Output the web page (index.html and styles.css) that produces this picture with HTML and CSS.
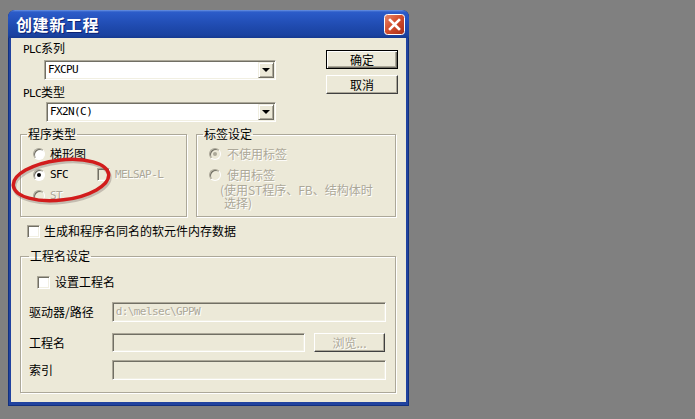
FILE: index.html
```html
<!DOCTYPE html>
<html lang="zh-CN">
  <head>
    <meta charset="UTF-8" />
    <meta name="viewport" content="width=device-width, initial-scale=1.0" />
    <title>创建新工程</title>
    <link rel="stylesheet" href="styles.css">
  </head>
  <body>
    <div class="window">
      <div class="titlebar">
        <span class="title">创建新工程</span>
        <span class="close">
          <svg width="21" height="21" viewBox="0 0 21 21">
            <defs>
              <linearGradient id="red" x1="0" y1="0" x2="1" y2="1">
                <stop offset="0" stop-color="#e98a6e" />
                <stop offset="0.45" stop-color="#d5502f" />
                <stop offset="1" stop-color="#a82b14" />
              </linearGradient>
            </defs>
            <rect x="0.5" y="0.5" width="20" height="20" rx="3" fill="url(#red)" stroke="#fff" />
            <path d="M6 6 L15 15 M15 6 L6 15" stroke="#fff" stroke-width="2.6" stroke-linecap="square" />
          </svg>
        </span>
      </div>

      <div class="client">
        <div class="top">
          <div class="fields">
            <div class="label"><span class="en">PLC</span>系列</div>
            <div class="combo combo--series">
              <span class="combo__value en">FXCPU</span>
              <span class="combo__btn"></span>
            </div>
            <div class="label label--type"><span class="en">PLC</span>类型</div>
            <div class="combo combo--type">
              <span class="combo__value en">FX2N(C)</span>
              <span class="combo__btn"></span>
            </div>
          </div>
          <div class="actions">
            <button class="btn btn--default">确定</button>
            <button class="btn">取消</button>
          </div>
        </div>

        <div class="groups">
          <fieldset class="group group--program">
            <legend>程序类型</legend>
            <div class="row">
              <span class="radio"></span><span class="text">梯形图</span>
            </div>
            <div class="row">
              <span class="opt-sfc"><span class="radio radio--on"></span><span class="text en">SFC</span></span>
              <span class="check check--off"></span><span class="text en off">MELSAP-L</span>
            </div>
            <div class="row">
              <span class="radio radio--off"></span><span class="text en off">ST</span>
            </div>
          </fieldset>

          <fieldset class="group group--label">
            <legend>标签设定</legend>
            <div class="row">
              <span class="radio radio--off radio--on"></span><span class="text text--wide off">不使用标签</span>
            </div>
            <div class="row">
              <span class="radio radio--off"></span><span class="text text--wide off">使用标签</span>
            </div>
            <p class="note off">(使用ST程序、FB、结构体时</p>
            <p class="note note--tail off">选择)</p>
          </fieldset>
        </div>

        <div class="row-check">
          <span class="check"></span><span class="text">生成和程序名同名的软元件内存数据</span>
        </div>

        <fieldset class="group group--project">
          <legend>工程名设定</legend>
          <div class="row-check row-check--name">
            <span class="check"></span><span class="text">设置工程名</span>
          </div>
          <div class="form-row form-row--path">
            <span class="form-label">驱动器/路径</span>
            <span class="input input--wide en off">d:\melsec\GPPW</span>
          </div>
          <div class="form-row form-row--name">
            <span class="form-label">工程名</span>
            <span class="input input--short"></span>
            <button class="btn btn--browse off">浏览...</button>
          </div>
          <div class="form-row form-row--index">
            <span class="form-label">索引</span>
            <span class="input input--wide"></span>
          </div>
        </fieldset>

        <svg class="mark" width="112" height="58" viewBox="0 0 112 58">
          <ellipse cx="51" cy="31" rx="48" ry="20" transform="rotate(-7 51 31)" fill="none" stroke="#7a6a66" stroke-opacity="0.35" stroke-width="4" />
          <ellipse cx="50" cy="29" rx="48" ry="20" transform="rotate(-7 50 29)" fill="none" stroke="#d21c1c" stroke-width="3.5" />
        </svg>
      </div>
    </div>
  </body>
</html>
```

FILE: styles.css
```css
* {
  margin: 0;
  padding: 0;
  box-sizing: border-box;
}
body {
  background-color: #808080;
  font: 12px/14px "Noto Sans CJK SC", sans-serif;
  color: #000;
}
.en {
  font-family: "DejaVu Sans Mono", "Noto Sans CJK SC", monospace;
  font-size: 11px;
  letter-spacing: -0.6px;
}
.off {
  color: #aca899;
  text-shadow: 1px 1px 0 #fff;
}

/* window frame */
.window {
  width: 401px;
  height: 396px;
  margin: 10px 0 0 8px;
  background-color: #21439f;
  border-radius: 7px 7px 0 0;
  box-shadow: inset 0 0 0 1px #12307f;
  padding-bottom: 4px;
  display: flex;
  flex-direction: column;
}
.titlebar {
  height: 28px;
  display: flex;
  align-items: center;
  justify-content: space-between;
  padding: 0 4px 0 8px;
  border-radius: 7px 7px 0 0;
  background: linear-gradient(to bottom, #6b93e2 0, #2c5cc9 2px, #2654bf 8px, #1f4aae 60%, #1a42a0 90%, #15398f 100%);
}
.title {
  color: #fff;
  font-weight: bold;
  font-size: 16px;
  letter-spacing: 0.6px;
  text-shadow: 1px 1px 0 #0c2273;
}
.close {
  display: block;
  width: 21px;
  height: 21px;
}
.close svg {
  display: block;
}
.client {
  flex: 1;
  margin: 0 3px;
  background-color: #ece9d8;
  padding-top: 3px;
  position: relative;
}

/* top section */
.top {
  display: flex;
}
.fields {
  width: 315px;
}
.label {
  padding-left: 12px;
  height: 14px;
}
.label--type {
  margin-top: 5px;
}
.combo {
  display: flex;
  align-items: center;
  height: 20px;
  background-color: #fff;
  border: 1px solid;
  border-color: #aca899 #fff #fff #aca899;
  box-shadow: inset 1px 1px 0 #716f64, inset -1px -1px 0 #f1efe2;
  padding: 1px 1px 1px 3px;
}
.combo--series {
  margin: 5px 0 0 33px;
  width: 232px;
}
.combo--type {
  margin: 3px 0 0 35px;
  width: 230px;
}
.combo__value {
  flex: 1;
}
.combo__btn {
  position: relative;
  width: 16px;
  height: 16px;
  background-color: #ece9d8;
  border: 1px solid;
  border-color: #f1efe2 #716f64 #716f64 #f1efe2;
  box-shadow: inset 1px 1px 0 #fff, inset -1px -1px 0 #aca899;
}
.combo__btn::after {
  content: "";
  position: absolute;
  left: 3px;
  top: 5px;
  border-left: 4px solid transparent;
  border-right: 4px solid transparent;
  border-top: 4px solid #000;
}
.actions {
  width: 72px;
  padding-top: 9px;
  display: flex;
  flex-direction: column;
  gap: 6px;
}
.btn {
  font: inherit;
  height: 19px;
  background-color: #ece9d8;
  border: 1px solid;
  border-color: #fff #404040 #404040 #fff;
  box-shadow: inset -1px -1px 0 #aca899;
  text-align: center;
}
.btn--default {
  border-color: #000;
  box-shadow: inset 1px 1px 0 #fff, inset -1px -1px 0 #716f64, inset -2px -2px 0 #aca899;
}

/* group boxes */
.groups {
  display: flex;
  gap: 9px;
  margin: 5px 0 0 9px;
}
.group {
  border: 1px solid #aca899;
  box-shadow: inset 1px 1px 0 #fff, 1px 1px 0 #fff;
  padding: 2px 6px 0;
  min-width: 0;
}
.group legend {
  padding: 0 1px;
  line-height: 14px;
}
.group--program {
  width: 167px;
  height: 90px;
}
.group--label {
  width: 200px;
  height: 90px;
}
.row {
  display: flex;
  align-items: center;
  height: 21px;
  margin-left: 6px;
}
.opt-sfc {
  display: flex;
  align-items: center;
  width: 64px;
}
.text {
  margin-left: 5px;
  white-space: nowrap;
}
.text--wide {
  margin-left: 6px;
}
.radio {
  position: relative;
  flex: none;
  width: 12px;
  height: 12px;
  border-radius: 50%;
  background-color: #fff;
  border: 1px solid;
  border-color: #aca899 #fff #fff #aca899;
  box-shadow: inset 1px 1px 0 #716f64;
}
.radio--on::after {
  content: "";
  position: absolute;
  left: 3px;
  top: 3px;
  width: 4px;
  height: 4px;
  border-radius: 50%;
  background-color: #000;
}
.radio--off {
  background-color: #ece9d8;
}
.radio--off::after {
  background-color: #aca899;
}
.check {
  flex: none;
  width: 13px;
  height: 13px;
  background-color: #fff;
  border: 1px solid;
  border-color: #aca899 #fff #fff #aca899;
  box-shadow: inset 1px 1px 0 #716f64, inset -1px -1px 0 #f1efe2;
}
.check--off {
  background-color: #ece9d8;
}
.note {
  margin: -2px 0 0 17px;
  line-height: 13px;
  white-space: nowrap;
}
.note--tail {
  margin-top: 0;
  padding-left: 4px;
}

.row-check {
  display: flex;
  align-items: center;
  height: 14px;
  margin: 7px 0 0 16px;
}
.row-check .text {
  margin-left: 4px;
}

/* project name */
.group--project {
  width: 376px;
  height: 144px;
  margin: 11px 0 0 9px;
  padding: 0 9px 0 8px;
}
.row-check--name {
  margin: 12px 0 0 8px;
}
.row-check--name .text {
  margin-left: 5px;
}
.form-row {
  display: flex;
  align-items: center;
}
.form-row--path {
  margin-top: 13px;
  height: 20px;
}
.form-row--name {
  margin-top: 11px;
  height: 19px;
}
.form-row--index {
  margin-top: 8px;
  height: 20px;
}
.form-label {
  width: 83px;
}
.input {
  height: 100%;
  display: flex;
  align-items: center;
  padding-left: 3px;
  background-color: #ece9d8;
  border: 1px solid;
  border-color: #aca899 #fff #fff #aca899;
  box-shadow: inset 1px 1px 0 #716f64, inset -1px -1px 0 #f1efe2;
}
.input--wide {
  width: 275px;
}
.input--short {
  width: 193px;
}
.btn--browse {
  width: 71px;
  margin-left: 9px;
  height: 19px;
}

/* red annotation ring */
.mark {
  position: absolute;
  left: 0;
  top: 113px;
}
```
